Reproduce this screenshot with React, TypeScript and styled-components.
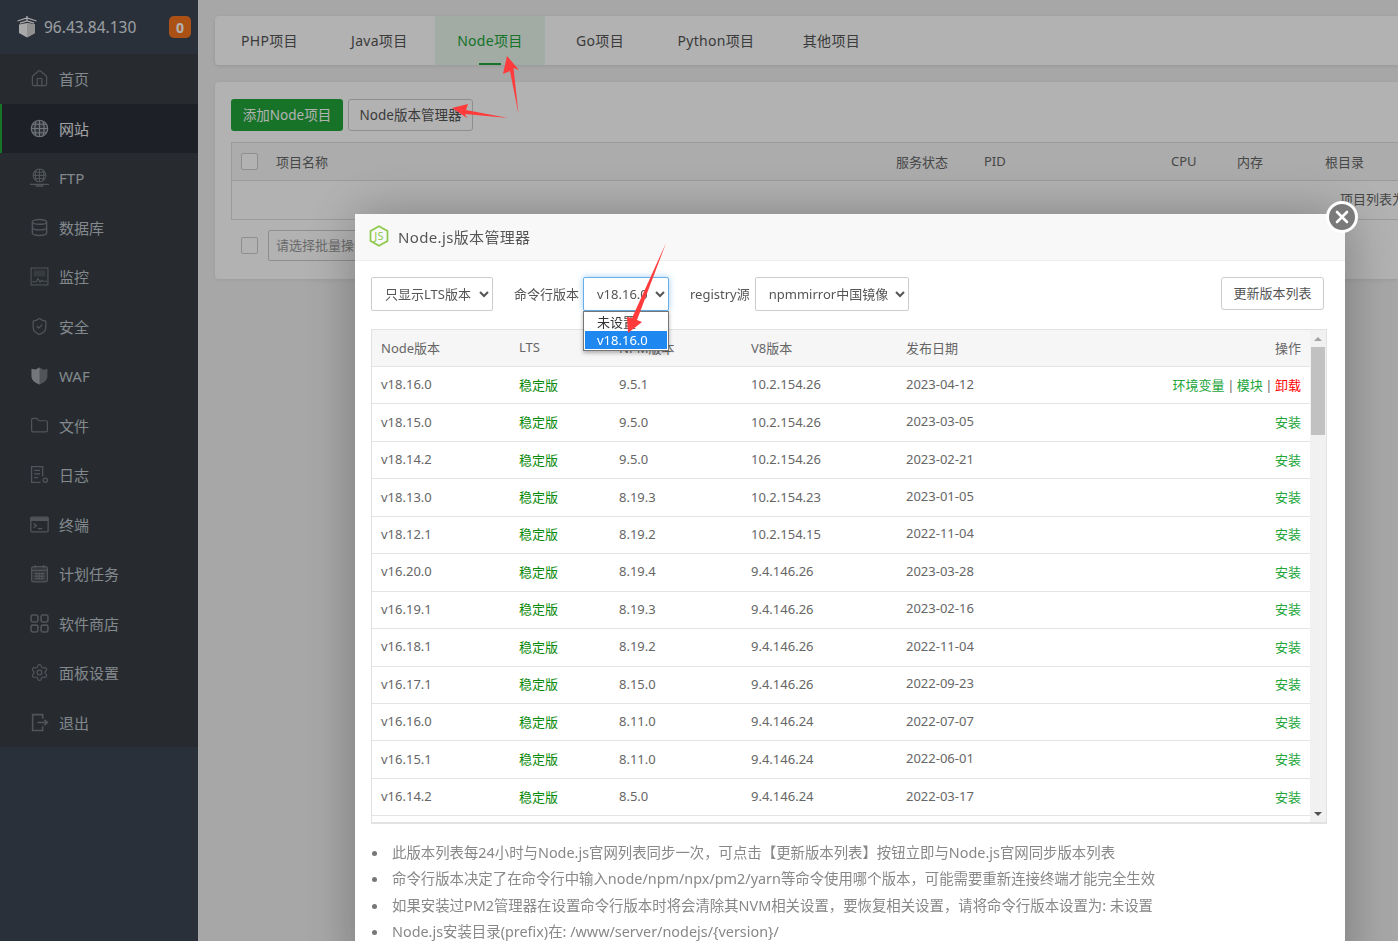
import styled, { createGlobalStyle } from 'styled-components'
import { Database, Folder, House, Settings, ShieldCheck } from 'lucide-react'

const GlobalStyle = createGlobalStyle`
  html, body {
    margin: 0;
    height: 100%;
    overflow: hidden;
    background: #f0f0f0;
    font-family: "Noto Sans", "Noto Sans CJK SC", sans-serif;
    font-size: 13px;
    color: #666;
  }
  * { box-sizing: border-box; }
`

const Page = styled.div`
  display: grid;
  grid-template-columns: 198px 1200px;
  width: 1398px;
  height: 941px;
  overflow: hidden;
`

/* sidebar */
const Sidebar = styled.aside`
  background: #3d4553;
  display: flex;
  flex-direction: column;
`
const SideTop = styled.div`
  height: 54px;
  display: flex;
  align-items: center;
  padding: 0 7px 0 17px;
  gap: 7px;
  color: #dfe3e8;
  font-size: 15.5px;
`
const Badge = styled.span`
  margin-left: auto;
  width: 22px;
  height: 22px;
  border-radius: 5px;
  background: #f5751f;
  color: #fff;
  font-weight: 700;
  font-size: 14px;
  display: flex;
  align-items: center;
  justify-content: center;
`
const Menu = styled.nav`
  background: #383e45;
  display: flex;
  flex-direction: column;
`
const MenuItem = styled.div<{ $active?: boolean }>`
  height: 49.5px;
  display: flex;
  align-items: center;
  gap: 10px;
  padding-left: 28px;
  font-size: 15px;
  color: ${(p) => (p.$active ? '#e4e8ec' : '#bcc3c9')};
  background: ${(p) => (p.$active ? '#2c2f38' : 'transparent')};
  border-left: 2px solid ${(p) => (p.$active ? '#20a53a' : 'transparent')};
  svg {
    width: 19px;
    height: 19px;
    flex: none;
    color: ${(p) => (p.$active ? '#a3a9af' : '#747a80')};
  }
`

/* main content behind the dialog */
const Main = styled.main`
  padding: 16px 0 0 17px;
  min-width: 0;
`
const TabCard = styled.div`
  height: 49px;
  background: #fff;
  border-radius: 4px 0 0 4px;
  box-shadow: 0 1px 4px rgba(0, 0, 0, 0.1);
  display: flex;
  font-size: 14px;
  letter-spacing: 0.3px;
  color: #555;
`
const Tab = styled.div<{ $active?: boolean; $pad?: number }>`
  position: relative;
  height: 49px;
  display: flex;
  align-items: center;
  padding: 0 ${(p) => p.$pad ?? 26}px 2px;
  white-space: nowrap;
  color: ${(p) => (p.$active ? '#20a53a' : '#555')};
  background: ${(p) => (p.$active ? '#e8f6eb' : 'transparent')};
  ${(p) =>
    p.$active &&
    `&::after {
      content: '';
      position: absolute;
      left: 50%;
      bottom: 0;
      width: 22px;
      height: 2px;
      margin-left: -11px;
      background: #20a53a;
    }`}
`
const ContentCard = styled.section`
  margin-top: 17px;
  height: 197px;
  background: #fff;
  border-radius: 4px 0 0 4px;
  box-shadow: 0 1px 4px rgba(0, 0, 0, 0.08);
  padding: 17px 0 0 16px;
`
const BtnRow = styled.div`
  display: flex;
  gap: 5px;
`
const GreenBtn = styled.div`
  height: 32px;
  width: 112px;
  padding-bottom: 2px;
  background: #20a53a;
  border-radius: 3px;
  color: #fff;
  display: flex;
  align-items: center;
  justify-content: center;
  font-size: 13.5px;
`
const PlainBtn = styled.div<{ $wide?: number }>`
  height: 32px;
  width: ${(p) => p.$wide ?? 125}px;
  padding-bottom: 2px;
  background: #fff;
  border: 1px solid #ccc;
  border-radius: 3px;
  color: #555;
  display: flex;
  align-items: center;
  justify-content: center;
  font-size: 13.5px;
`
const ProjectTable = styled.div`
  margin-top: 11px;
  border: 1px solid #ddd;
  border-right: 0;
`
const ProjectHead = styled.div`
  height: 38px;
  padding-bottom: 1px;
  display: grid;
  grid-template-columns: 44px 620px 88px 187px 66px 88px 100px;
  align-items: center;
  background: #f6f6f6;
  border-bottom: 1px solid #ddd;
  color: #666;
  white-space: nowrap;
`
const CheckCell = styled.div`
  display: flex;
  padding-left: 9px;
`
const Check = styled.span`
  display: block;
  width: 17px;
  height: 17px;
  border: 1px solid #ccc;
  border-radius: 2px;
  background: #fff;
`
const EmptyRow = styled.div`
  height: 38px;
  padding: 8px 0 0 1108px;
  white-space: nowrap;
  overflow: hidden;
  color: #666;
`
const BatchRow = styled.div`
  margin-top: 10px;
  display: flex;
  align-items: center;
  padding-left: 10px;
  gap: 10px;
`
const BatchInput = styled.div`
  width: 200px;
  height: 31px;
  padding: 0 7px 3px;
  border: 1px solid #ccc;
  border-radius: 2px;
  display: flex;
  align-items: center;
  color: #999;
  white-space: nowrap;
`

/* dialog */
const Shade = styled.div`
  position: fixed;
  inset: 0;
  background: rgba(0, 0, 0, 0.3);
`
const Dialog = styled.div`
  position: fixed;
  left: 355px;
  top: 214px;
  width: 990px;
  height: 760px;
  background: #fff;
  box-shadow: 1px 1px 50px rgba(0, 0, 0, 0.3);
`
const DialogHead = styled.header`
  height: 47px;
  padding: 0 0 2px 14px;
  background: #f8f8f8;
  border-bottom: 1px solid #eee;
  display: flex;
  align-items: center;
  gap: 9px;
  font-size: 15px;
  letter-spacing: 0.35px;
  color: #555;
`
const CloseBtn = styled.div`
  position: absolute;
  right: -13px;
  top: -13px;
  width: 32px;
  height: 32px;
  border-radius: 50%;
  background: #7a7a7a;
  border: 3px solid #fff;
  display: flex;
  align-items: center;
  justify-content: center;
`
const DialogBody = styled.div`
  padding: 16px 21px 0 16px;
`
const Toolbar = styled.div`
  display: flex;
  align-items: flex-start;
  height: 34px;
`
const Select = styled.select<{ $w: number; $focus?: boolean }>`
  width: ${(p) => p.$w}px;
  height: 34px;
  padding: 0 0 0 9px;
  font: inherit;
  font-size: 13px;
  color: #555;
  background: #fff;
  border: 1px solid ${(p) => (p.$focus ? '#66afe9' : '#ccc')};
  border-radius: 2px;
  outline: none;
  box-shadow: ${(p) => (p.$focus ? '0 0 6px rgba(102, 175, 233, 0.6)' : 'none')};
`
const ToolLabel = styled.label<{ $right: number }>`
  margin-left: 21px;
  margin-right: ${(p) => p.$right}px;
  line-height: 34px;
  white-space: nowrap;
  color: #555;
`
const SelectWrap = styled.div`
  position: relative;
`
const OptionList = styled.div`
  position: absolute;
  left: 0;
  top: 34px;
  width: 86px;
  padding: 1px;
  background: #fff;
  border: 1px solid #767676;
  box-shadow: 0 2px 4px rgba(0, 0, 0, 0.3);
  z-index: 2;
`
const Option = styled.div<{ $selected?: boolean }>`
  height: 18px;
  line-height: 18px;
  padding-left: 12px;
  color: ${(p) => (p.$selected ? '#fff' : '#333')};
  background: ${(p) => (p.$selected ? '#1e88f0' : 'transparent')};
`
const RefreshBtn = styled(PlainBtn)`
  margin-left: auto;
  height: 33px;
  font-size: 13px;
`
const VersionBox = styled.div`
  margin-top: 18px;
  width: 956px;
  height: 495px;
  border: 1px solid #e2e2e2;
  border-width: 1px 1px 2px 1px;
  display: grid;
  grid-template-columns: 1fr 16px;
  overflow: hidden;
`
const RowList = styled.div`
  min-width: 0;
  overflow: hidden;
`
const Row = styled.div<{ $head?: boolean }>`
  display: grid;
  grid-template-columns: 138px 100px 132px 155px 1fr;
  align-items: center;
  height: ${(p) => (p.$head ? 37 : 37.45)}px;
  padding: 0 9px 2px;
  background: ${(p) => (p.$head ? '#f6f6f6' : '#fff')};
  border-bottom: 1px solid #e4e4e4;
  color: #666;
  white-space: nowrap;
`
const Lts = styled.span`
  color: #0a8a0a;
`
const OpLink = styled.span<{ $danger?: boolean }>`
  color: ${(p) => (p.$danger ? '#f00' : '#20a53a')};
`
const Pipe = styled.span`
  margin: 0 2.5px;
  color: #666;
`
const SplitCell = styled.div`
  display: flex;
  justify-content: space-between;
`
const ScrollTrack = styled.div`
  background: #f1f1f1;
  display: flex;
  flex-direction: column;
  align-items: center;
`
const ArrowSlot = styled.div<{ $down?: boolean }>`
  flex: none;
  height: 17px;
  display: flex;
  align-items: center;
  justify-content: center;
  margin-top: ${(p) => (p.$down ? 'auto' : '0')};
  &::before {
    content: '';
    border-left: 4px solid transparent;
    border-right: 4px solid transparent;
    ${(p) => (p.$down ? 'border-top: 4px solid #505050;' : 'border-bottom: 4px solid #a3a3a3;')}
  }
`
const ScrollThumb = styled.div`
  width: 14px;
  height: 88px;
  background: #c1c1c1;
`
const Notes = styled.ul`
  margin: 16px 0 0;
  padding: 0 0 0 21px;
  list-style: none;
  color: #888;
  font-size: 14.4px;
`
const Note = styled.li`
  position: relative;
  height: 26.4px;
  line-height: 26.4px;
  white-space: nowrap;
  &::before {
    content: '';
    position: absolute;
    left: -20px;
    top: 11px;
    width: 5px;
    height: 5px;
    border-radius: 50%;
    background: #777;
  }
`
const Annotations = styled.svg`
  position: fixed;
  left: 0;
  top: 0;
  z-index: 5;
  pointer-events: none;
`

const ShipLogo = () => (
  <svg width="20" height="22" viewBox="0 0 20 22">
    <path d="M2 8.500 10 7l8 1.500V17l-8 4.500L2 17z" fill="#f2f2f2" />
    <path d="M10 7v14.500L18 17V8.500z" fill="#cfcfcf" />
    <path d="M0.500 5 10 2l9.500 3M3 7.200 10 5l7 2.200M10 0v5" stroke="#f2f2f2" strokeWidth="1.300" fill="none" />
  </svg>
)

const GlobeIcon = () => (
  <svg viewBox="0 0 18 18" fill="none" stroke="currentColor" strokeWidth="1.100">
    <circle cx="9" cy="9" r="7.800" fill="currentColor" fillOpacity=".25" />
    <path d="M1.200 9h15.600M2.400 5h13.200M2.400 13h13.200M9 1.200v15.600M5.800 2q-2.400 7 0 14M12.200 2q2.400 7 0 14" />
  </svg>
)
const FtpIcon = () => (
  <svg viewBox="0 0 18 18" fill="none" stroke="currentColor" strokeWidth="1">
    <circle cx="9" cy="7" r="6" />
    <path d="M3 7h12M4 4h10M4 10h10M9 1v12M6 1.800q-2 5 0 10.500M12 1.800q2 5 0 10.500" />
    <path d="M0 15.500h18M6 15.500h6v1.500H6z" strokeWidth="1.300" />
  </svg>
)
const MonitorIcon = () => (
  <svg viewBox="0 0 18 18" fill="none" stroke="currentColor" strokeWidth="1">
    <rect x="1" y="1" width="16" height="16" />
    <path d="M4 3.500h10v5H4z" fill="currentColor" opacity=".4" />
    <path d="M2 14h4l1.500-3 2 3.500 1.500-2 1 1h4" />
  </svg>
)
const WafIcon = () => (
  <svg viewBox="0 0 18 18" fill="currentColor">
    <path d="M1.500 2.500 5 3.500 9 1.500l4 2 3.500-1V10c0 3.500-3.500 6-7.500 7.500C5 16 1.500 13.500 1.500 10z" />
    <path d="M9 1.500v16C5 16 1.500 13.500 1.500 10V2.500L5 3.500z" fill="#a7abaf" />
  </svg>
)
const LogIcon = () => (
  <svg viewBox="0 0 18 18" fill="none" stroke="currentColor" strokeWidth="1.200">
    <path d="M12 11V1.500H1.500v15H10" />
    <path d="M4 5h5.500M4 8.500h5.500M4 12h3.500" />
    <circle cx="14.500" cy="14.500" r="2" />
  </svg>
)
const TerminalIcon = () => (
  <svg viewBox="0 0 18 18" fill="none" stroke="currentColor" strokeWidth="1.200">
    <rect x="0.800" y="2" width="16.400" height="14" rx="1" />
    <path d="M1 3h16v2H1z" fill="currentColor" />
    <path d="M3.500 8l2.500 2-2.500 2M7.500 13h4" />
  </svg>
)
const CalendarIcon = () => (
  <svg viewBox="0 0 18 18" fill="none" stroke="currentColor" strokeWidth="1.100">
    <rect x="1.500" y="2.500" width="15" height="14.500" rx="2" fill="currentColor" fillOpacity=".3" />
    <path d="M5 1v3M13 1v3M1.500 6h15M4 9h10M4 11.500h10M4 14h10M6.500 8v7M9 8v7M11.500 8v7" />
  </svg>
)
const GridIcon = () => (
  <svg viewBox="0 0 18 18" fill="none" stroke="currentColor" strokeWidth="1.500">
    <rect x="1" y="1" width="6.500" height="6.500" rx="1.500" />
    <rect x="10.500" y="1" width="6.500" height="6.500" rx="1.500" />
    <rect x="1" y="10.500" width="6.500" height="6.500" rx="1.500" />
    <rect x="10.500" y="10.500" width="6.500" height="6.500" rx="1.500" />
  </svg>
)
const ExitIcon = () => (
  <svg viewBox="0 0 18 18" fill="none" stroke="currentColor" strokeWidth="1.500">
    <path d="M12 5.500V1.500H2.500v15H12v-4" />
    <path d="M7 9h9.500M13.500 6.500 16.500 9l-3 2.500" />
  </svg>
)

const menuItems = [
  { label: '首页', icon: <House strokeWidth={1.5} /> },
  { label: '网站', icon: <GlobeIcon />, active: true },
  { label: 'FTP', icon: <FtpIcon /> },
  { label: '数据库', icon: <Database strokeWidth={1.8} /> },
  { label: '监控', icon: <MonitorIcon /> },
  { label: '安全', icon: <ShieldCheck strokeWidth={1.6} /> },
  { label: 'WAF', icon: <WafIcon /> },
  { label: '文件', icon: <Folder strokeWidth={1.5} /> },
  { label: '日志', icon: <LogIcon /> },
  { label: '终端', icon: <TerminalIcon /> },
  { label: '计划任务', icon: <CalendarIcon /> },
  { label: '软件商店', icon: <GridIcon /> },
  { label: '面板设置', icon: <Settings strokeWidth={1.5} /> },
  { label: '退出', icon: <ExitIcon /> },
]

const versions = [
  ['v18.16.0', '9.5.1', '10.2.154.26', '2023-04-12'],
  ['v18.15.0', '9.5.0', '10.2.154.26', '2023-03-05'],
  ['v18.14.2', '9.5.0', '10.2.154.26', '2023-02-21'],
  ['v18.13.0', '8.19.3', '10.2.154.23', '2023-01-05'],
  ['v18.12.1', '8.19.2', '10.2.154.15', '2022-11-04'],
  ['v16.20.0', '8.19.4', '9.4.146.26', '2023-03-28'],
  ['v16.19.1', '8.19.3', '9.4.146.26', '2023-02-16'],
  ['v16.18.1', '8.19.2', '9.4.146.26', '2022-11-04'],
  ['v16.17.1', '8.15.0', '9.4.146.26', '2022-09-23'],
  ['v16.16.0', '8.11.0', '9.4.146.24', '2022-07-07'],
  ['v16.15.1', '8.11.0', '9.4.146.24', '2022-06-01'],
  ['v16.14.2', '8.5.0', '9.4.146.24', '2022-03-17'],
]

const notes = [
  '此版本列表每24小时与Node.js官网列表同步一次，可点击【更新版本列表】按钮立即与Node.js官网同步版本列表',
  '命令行版本决定了在命令行中输入node/npm/npx/pm2/yarn等命令使用哪个版本，可能需要重新连接终端才能完全生效',
  '如果安装过PM2管理器在设置命令行版本时将会清除其NVM相关设置，要恢复相关设置，请将命令行版本设置为: 未设置',
  'Node.js安装目录(prefix)在: /www/server/nodejs/{version}/',
]

export default function App() {
  return (
    <>
      <GlobalStyle />
      <Page>
        <Sidebar>
          <SideTop>
            <ShipLogo />
            96.43.84.130
            <Badge>0</Badge>
          </SideTop>
          <Menu>
            {menuItems.map((m) => (
              <MenuItem key={m.label} $active={m.active}>
                {m.icon}
                {m.label}
              </MenuItem>
            ))}
          </Menu>
        </Sidebar>

        <Main>
          <TabCard>
            <Tab>PHP项目</Tab>
            <Tab $pad={27.2}>Java项目</Tab>
            <Tab $active $pad={22.5}>
              Node项目
            </Tab>
            <Tab $pad={31}>Go项目</Tab>
            <Tab $pad={22.5}>Python项目</Tab>
            <Tab>其他项目</Tab>
          </TabCard>
          <ContentCard>
            <BtnRow>
              <GreenBtn>添加Node项目</GreenBtn>
              <PlainBtn>Node版本管理器</PlainBtn>
            </BtnRow>
            <ProjectTable>
              <ProjectHead>
                <CheckCell>
                  <Check />
                </CheckCell>
                <span>项目名称</span>
                <span>服务状态</span>
                <span>PID</span>
                <span>CPU</span>
                <span>内存</span>
                <span>根目录</span>
              </ProjectHead>
              <EmptyRow>项目列表为空</EmptyRow>
            </ProjectTable>
            <BatchRow>
              <Check />
              <BatchInput>请选择批量操作</BatchInput>
            </BatchRow>
          </ContentCard>
        </Main>
      </Page>

      <Shade />

      <Dialog>
        <DialogHead>
          <svg width="20" height="22" viewBox="0 0 20 22">
            <path d="M10 1.200 18.500 6v10L10 20.800 1.500 16V6z" fill="none" stroke="#8cc84b" strokeWidth="1.700" />
            <text x="10" y="15" textAnchor="middle" fontSize="11" fill="#8cc84b" fontFamily="Noto Sans, sans-serif">
              JS
            </text>
          </svg>
          Node.js版本管理器
          <CloseBtn>
            <svg width="14" height="14" viewBox="0 0 14 14">
              <path d="M2 2l10 10M12 2 2 12" stroke="#fff" strokeWidth="2.600" strokeLinecap="round" />
            </svg>
          </CloseBtn>
        </DialogHead>
        <DialogBody>
          <Toolbar>
            <Select $w={122} defaultValue="lts">
              <option value="lts">只显示LTS版本</option>
            </Select>
            <ToolLabel $right={4}>命令行版本</ToolLabel>
            <SelectWrap>
              <Select $w={86} $focus defaultValue="v18">
                <option value="v18">v18.16.0</option>
              </Select>
              <OptionList>
                <Option>未设置</Option>
                <Option $selected>v18.16.0</Option>
              </OptionList>
            </SelectWrap>
            <ToolLabel $right={5}>registry源</ToolLabel>
            <Select $w={154} defaultValue="npm">
              <option value="npm">npmmirror中国镜像</option>
            </Select>
            <RefreshBtn $wide={103}>更新版本列表</RefreshBtn>
          </Toolbar>

          <VersionBox>
            <RowList>
              <Row $head>
                <span>Node版本</span>
                <span>LTS</span>
                <span>NPM版本</span>
                <span>V8版本</span>
                <SplitCell>
                  <span>发布日期</span>
                  <span>操作</span>
                </SplitCell>
              </Row>
              {versions.map((v, i) => (
                <Row key={v[0]}>
                  <span>{v[0]}</span>
                  <Lts>稳定版</Lts>
                  <span>{v[1]}</span>
                  <span>{v[2]}</span>
                  <SplitCell>
                    <span>{v[3]}</span>
                    {i === 0 ? (
                      <span>
                        <OpLink>环境变量</OpLink>
                        <Pipe>|</Pipe>
                        <OpLink>模块</OpLink>
                        <Pipe>|</Pipe>
                        <OpLink $danger>卸载</OpLink>
                      </span>
                    ) : (
                      <OpLink>安装</OpLink>
                    )}
                  </SplitCell>
                </Row>
              ))}
            </RowList>
            <ScrollTrack>
              <ArrowSlot />
              <ScrollThumb />
              <ArrowSlot $down />
            </ScrollTrack>
          </VersionBox>

          <Notes>
            {notes.map((n) => (
              <Note key={n}>{n}</Note>
            ))}
          </Notes>
        </DialogBody>
      </Dialog>

      <Annotations width="1398" height="941" viewBox="0 0 1398 941">
        <path d="M507 56 519 70 513.500 68 518.500 114 510 71 503 74z" fill="#ff3b3b" />
        <path d="M452 108 468 104 466 110 508 118 465 114 467 118z" fill="#ff3b3b" />
        <path d="M666 243 637 320 642 322 628 333 627 317 632 318z" fill="#ff3b3b" />
      </Annotations>
    </>
  )
}
